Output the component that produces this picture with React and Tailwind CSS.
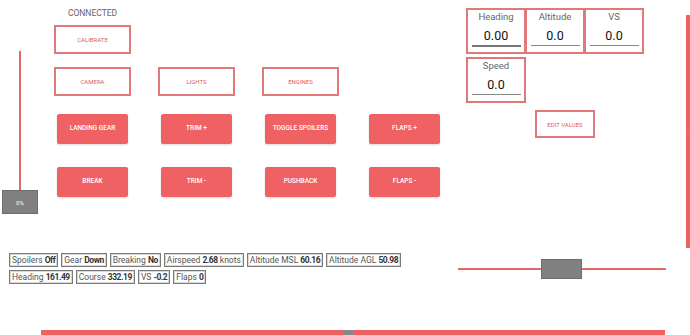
import React from "react";

function OutlineBtn({ children, className = "" }) {
  return (
    <div
      className={`flex h-[29px] w-[77px] items-center justify-center border-2 border-[#e27878] text-[6px] uppercase text-[#e05a5a] ${className}`}
    >
      {children}
    </div>
  );
}

function FillBtn({ children }) {
  return (
    <div className="mx-[3px] flex h-[30px] w-[71px] items-center justify-center rounded-[2px] bg-[#ef6163] text-[6.5px] font-medium uppercase text-white shadow-[0_1px_2px_rgba(0,0,0,0.15)]">
      {children}
    </div>
  );
}

function Field({ label, value, focused }) {
  return (
    <div className="flex h-[46px] w-[60px] flex-col items-center border-2 border-[#e27878] -ml-[1px] first:ml-0">
      <div className="mt-[1px] text-[9.5px] leading-[12px] text-[#666]">{label}</div>
      <div className="mt-[6px] text-[12.5px] leading-[14px] text-[#111]">{value}</div>
      <div
        className={`mt-[2px] w-[49px] ${focused ? "h-[2px] bg-[#777]" : "h-[1px] bg-[#888]"}`}
      />
    </div>
  );
}

function Badge({ label, value }) {
  return (
    <div className="flex h-[14px] items-center border border-[#7a7a7a] px-[2px] text-[8.5px] leading-[11px] text-[#555] shadow-[inset_0_0_0_1px_#d8d8d8]">
      {label}&nbsp;<b className="font-bold tracking-[-0.45px] text-[#333]">{value}</b>
    </div>
  );
}

export default function App() {
  return (
    <div className="relative flex h-[335px] w-[690px] flex-col overflow-hidden bg-white font-['Roboto',sans-serif]">
      {/* Top area */}
      <div className="flex h-[250px] shrink-0">
        {/* Vertical slider */}
        <div className="ml-[2px] flex w-[36px] flex-col items-center pt-[51px]">
          <div className="h-[139px] w-[2px] bg-[#e06a6a]" />
          <div className="flex h-[24px] w-[36px] items-center justify-center border border-[#6d6d6d] bg-[#808080] text-[6px] text-white">
            0%
          </div>
        </div>

        {/* Buttons */}
        <div className="ml-[16px] flex w-[389px] flex-col">
          <div className="mt-[8px] w-[77px] text-center text-[8.5px] font-normal leading-[10px] text-[#666]">
            CONNECTED
          </div>
          <OutlineBtn className="mt-[7px]">Calibrate</OutlineBtn>
          <div className="mt-[13px] flex gap-x-[27px]">
            <OutlineBtn>Camera</OutlineBtn>
            <OutlineBtn>Lights</OutlineBtn>
            <OutlineBtn>Engines</OutlineBtn>
          </div>
          <div className="mt-[18px] flex gap-x-[27px]">
            <FillBtn>Landing Gear</FillBtn>
            <FillBtn>Trim +</FillBtn>
            <FillBtn>Toggle Spoilers</FillBtn>
            <FillBtn>Flaps +</FillBtn>
          </div>
          <div className="mt-[23px] flex gap-x-[27px]">
            <FillBtn>Break</FillBtn>
            <FillBtn>Trim -</FillBtn>
            <FillBtn>Pushback</FillBtn>
            <FillBtn>Flaps -</FillBtn>
          </div>
        </div>

        {/* Instruments */}
        <div className="ml-[23px] flex w-[180px] flex-col pt-[8px]">
          <div className="flex">
            <Field label="Heading" value="0.00" focused />
            <Field label="Altitude" value="0.0" />
            <Field label="VS" value="0.0" />
          </div>
          <div className="mt-[3px] flex">
            <Field label="Speed" value="0.0" />
          </div>
          <div className="ml-[69px] mt-[7px] flex h-[28px] w-[60px] items-center justify-center border-2 border-[#e27878] text-[6px] uppercase text-[#e05a5a]">
            Edit Values
          </div>
        </div>

        {/* Right vertical bar */}
        <div className="ml-auto mt-[15px] flex h-[233px] w-[4px] flex-col bg-[#ef6163]">
          <div className="mt-[116px] h-[1px] w-full bg-[#999]" />
        </div>
      </div>

      {/* Badges + horizontal slider */}
      <div className="flex">
        <div className="ml-[9px] mt-[3px] flex flex-col gap-[3px]">
          <div className="flex gap-[3px]">
            <Badge label="Spoilers" value="Off" />
            <Badge label="Gear" value="Down" />
            <Badge label="Breaking" value="No" />
            <Badge label="Airspeed" value={<>2.68<span className="font-normal tracking-normal text-[#555]"> knots</span></>} />
            <Badge label="Altitude MSL" value="60.16" />
            <Badge label="Altitude AGL" value="50.98" />
          </div>
          <div className="flex gap-[3px]">
            <Badge label="Heading" value="161.49" />
            <Badge label="Course" value="332.19" />
            <Badge label="VS" value="-0.2" />
            <Badge label="Flaps" value="0" />
          </div>
        </div>
        <div className="ml-auto mr-[24px] mt-[9px] flex h-[20px] w-[208px] items-center">
          <div className="h-[1.5px] w-[83px] bg-[#e06a6a]" />
          <div className="h-[20px] w-[41px] border border-[#6d6d6d] bg-[#808080]" />
          <div className="h-[1.5px] flex-1 bg-[#e06a6a]" />
        </div>
      </div>

      {/* Bottom bar */}
      <div className="mt-auto ml-[41px] flex h-[5px] w-[624px] bg-[#ef6163]">
        <div className="ml-[303px] h-full w-[9px] bg-[#888]" />
      </div>
    </div>
  );
}
